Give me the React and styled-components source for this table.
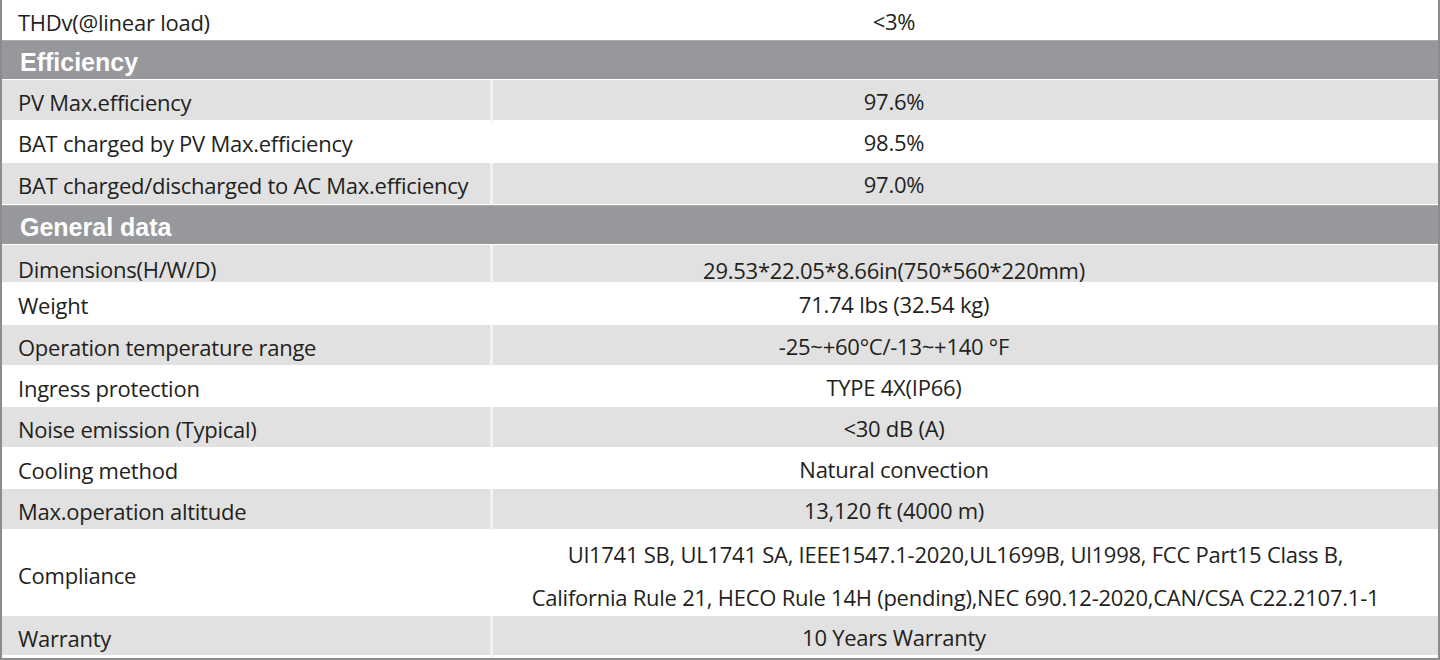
import React from "react";
import styled, { createGlobalStyle } from "styled-components";

const GlobalStyle = createGlobalStyle`
  html, body {
    margin: 0;
    padding: 0;
    background: #ffffff;
  }
`;

const SpecTable = styled.div`
  width: 1440px;
  height: 660px;
  box-sizing: border-box;
  border-left: 2px solid #8c8c8e;
  border-right: 2px solid #8c8c8e;
  border-bottom: 2px solid #8c8c8e;
  display: flex;
  flex-direction: column;
  overflow: hidden;
  font-family: "Open Sans", "Noto Sans", sans-serif;
  color: #231f20;
`;

const Row = styled.div`
  display: grid;
  grid-template-columns: 491px 1fr;
  height: ${(p) => p.h || 41}px;
  background: ${(p) => (p.shaded ? "#e1e1e1" : "#ffffff")};
  border-bottom: 1px solid #ffffff;
  box-sizing: border-box;
`;

const Label = styled.div`
  display: flex;
  align-items: center;
  padding-left: 16px;
  font-size: 22px;
  letter-spacing: -0.25px;
  border-right: 3px solid ${(p) => (p.shaded ? "#f2f2f2" : "#ffffff")};
  padding-top: ${(p) => p.nudge || 0}px;
`;

const Value = styled.div`
  display: flex;
  flex-direction: column;
  align-items: center;
  justify-content: center;
  padding-right: ${(p) => (p.wide ? 20 : 143)}px;
  padding-top: ${(p) => p.nudge || 0}px;
  font-size: 22px;
  letter-spacing: -0.25px;
  line-height: 43px;
`;

const Section = styled.div`
  height: 40px;
  background: #97989c;
  border-top: 1px solid #a9aaad;
  border-bottom: 1px solid #ffffff;
  box-sizing: border-box;
  display: flex;
  align-items: center;
  padding: 4px 0 0 18px;
  font-family: "Liberation Sans", Arial, sans-serif;
  font-weight: bold;
  font-size: 25px;
  color: #ffffff;
`;

const groups = [
  {
    rows: [{ label: "THDv(@linear load)", value: "<3%", h: 40 }],
  },
  {
    title: "Efficiency",
    rows: [
      { label: "PV Max.efficiency", value: "97.6%", shaded: true },
      { label: "BAT charged by PV Max.efficiency", value: "98.5%", h: 42 },
      { label: "BAT charged/discharged to AC Max.efficiency", value: "97.0%", shaded: true, h: 42 },
    ],
  },
  {
    title: "General data",
    rows: [
      { label: "Dimensions(H/W/D)", value: "29.53*22.05*8.66in(750*560*220mm)", shaded: true, h: 38, nudge: 4 },
      { label: "Weight", value: "71.74 lbs (32.54 kg)", h: 42 },
      { label: "Operation temperature range", value: "-25~+60°C/-13~+140 °F", shaded: true },
      { label: "Ingress protection", value: "TYPE 4X(IP66)" },
      { label: "Noise emission (Typical)", value: "<30 dB (A)", shaded: true },
      { label: "Cooling method", value: "Natural convection" },
      { label: "Max.operation altitude", value: "13,120 ft (4000 m)", shaded: true },
      {
        label: "Compliance",
        value: [
          "Ul1741 SB, UL1741 SA, IEEE1547.1-2020,UL1699B, Ul1998, FCC Part15 Class B,",
          "California Rule 21, HECO Rule 14H (pending),NEC 690.12-2020,CAN/CSA C22.2107.1-1",
        ],
        h: 86,
        wide: true,
        nudge: 3,
      },
      { label: "Warranty", value: "10 Years Warranty", shaded: true, h: 40 },
    ],
  },
];

function App() {
  return (
    <>
      <GlobalStyle />
      <SpecTable>
        {groups.map((g, gi) => (
          <React.Fragment key={gi}>
            {g.title && <Section>{g.title}</Section>}
            {g.rows.map((r) => (
              <Row key={r.label} shaded={r.shaded} h={r.h}>
                <Label shaded={r.shaded} nudge={r.nudge === 4 ? -2 : 0}>
                  {r.label}
                </Label>
                <Value wide={r.wide} nudge={r.nudge}>
                  {Array.isArray(r.value)
                    ? r.value.map((line) => <span key={line}>{line}</span>)
                    : r.value}
                </Value>
              </Row>
            ))}
          </React.Fragment>
        ))}
      </SpecTable>
    </>
  );
}

export default App;
